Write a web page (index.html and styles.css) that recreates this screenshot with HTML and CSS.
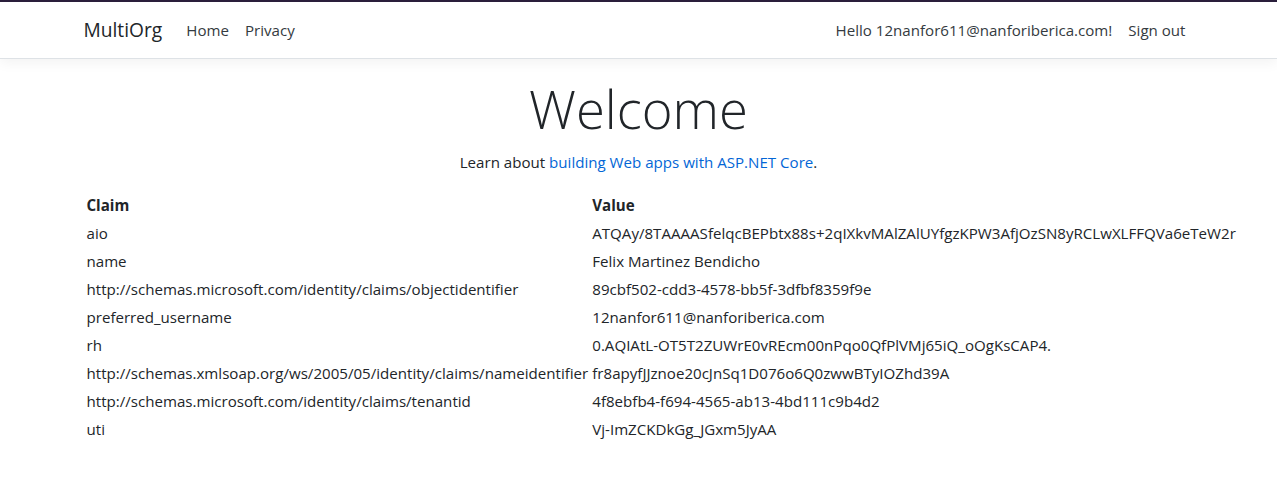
FILE: index.html
```html
<!DOCTYPE html>
<html lang="en">
<head>
<meta charset="utf-8">
<title>MultiOrg</title>
<link rel="stylesheet" href="styles.css">
</head>
<body>
<div class="topline"></div>
<header>
  <nav class="navbar">
    <div class="container nav-inner">
      <a class="brand" href="#">MultiOrg</a>
      <ul class="nav-links">
        <li><a class="nav-link" href="#">Home</a></li>
        <li><a class="nav-link" href="#">Privacy</a></li>
      </ul>
      <ul class="nav-links nav-right">
        <li><span class="nav-text">Hello 12nanfor611@nanforiberica.com!</span></li>
        <li><a class="nav-link" href="#">Sign out</a></li>
      </ul>
    </div>
  </nav>
</header>
<div class="container">
  <main class="main">
    <div class="text-center">
      <h1 class="display">Welcome</h1>
      <p class="lead-p">Learn about <a class="link" href="#">building Web apps with ASP.NET Core</a>.</p>
    </div>
    <table class="claims">
      <tr><th>Claim</th><th>Value</th></tr>
      <tr><td>aio</td><td>ATQAy/8TAAAASfelqcBEPbtx88s+2qIXkvMAlZAlUYfgzKPW3AfjOzSN8yRCLwXLFFQVa6eTeW2r</td></tr>
      <tr><td>name</td><td>Felix Martinez Bendicho</td></tr>
      <tr><td>http://schemas.microsoft.com/identity/claims/objectidentifier</td><td>89cbf502-cdd3-4578-bb5f-3dfbf8359f9e</td></tr>
      <tr><td>preferred_username</td><td>12nanfor611@nanforiberica.com</td></tr>
      <tr><td>rh</td><td>0.AQIAtL-OT5T2ZUWrE0vREcm00nPqo0QfPlVMj65iQ_oOgKsCAP4.</td></tr>
      <tr><td>http://schemas.xmlsoap.org/ws/2005/05/identity/claims/nameidentifier</td><td>fr8apyfJJznoe20cJnSq1D076o6Q0zwwBTyIOZhd39A</td></tr>
      <tr><td>http://schemas.microsoft.com/identity/claims/tenantid</td><td>4f8ebfb4-f694-4565-ab13-4bd111c9b4d2</td></tr>
      <tr><td>uti</td><td>Vj-ImZCKDkGg_JGxm5JyAA</td></tr>
    </table>
  </main>
</div>
</body>
</html>
```
FILE: styles.css
```css
html { font-size: 16px; }
body {
  margin: 0;
  font-family: "Segoe UI", "Open Sans", "Noto Sans", sans-serif;
  font-size: 15.1px;
  line-height: 24px;
  color: #212529;
  background: #fff;
}
.topline { height: 2px; background: #2b1f3c; }
.container {
  max-width: 1140px;
  margin: 0 auto;
  padding: 0 15px;
  box-sizing: border-box;
}
.navbar {
  padding: 8px 0;
  background: #fff;
  border-bottom: 1px solid #dee2e6;
  box-shadow: 0 4px 12px rgba(0,0,0,0.05);
  margin-bottom: 16px;
}
.nav-inner { display: flex; align-items: center; }
.brand {
  font-size: 19.2px;
  line-height: 30px;
  padding: 5px 0;
  margin-right: 16px;
  color: #212529;
  text-decoration: none;
  white-space: nowrap;
}
.nav-links { list-style: none; margin: 0; padding: 0; display: flex; align-items: center; }
.nav-right { margin-left: auto; }
.nav-link, .nav-text {
  display: block;
  padding: 8px;
  color: #343a40;
  text-decoration: none;
}
.main { padding-bottom: 16px; }
.text-center { text-align: center; }
.display {
  font-size: 52.6px;
  font-weight: 300;
  line-height: 67.2px;
  margin: 0 0 8px;
}
.lead-p { margin: 0 0 16px; }
.link { color: #0366d6; text-decoration: none; }
.claims { border-collapse: separate; border-spacing: 2px; }
.claims th, .claims td {
  padding: 1px;
  text-align: left;
  vertical-align: middle;
  white-space: nowrap;
}
.claims th { font-weight: 700; }
```
